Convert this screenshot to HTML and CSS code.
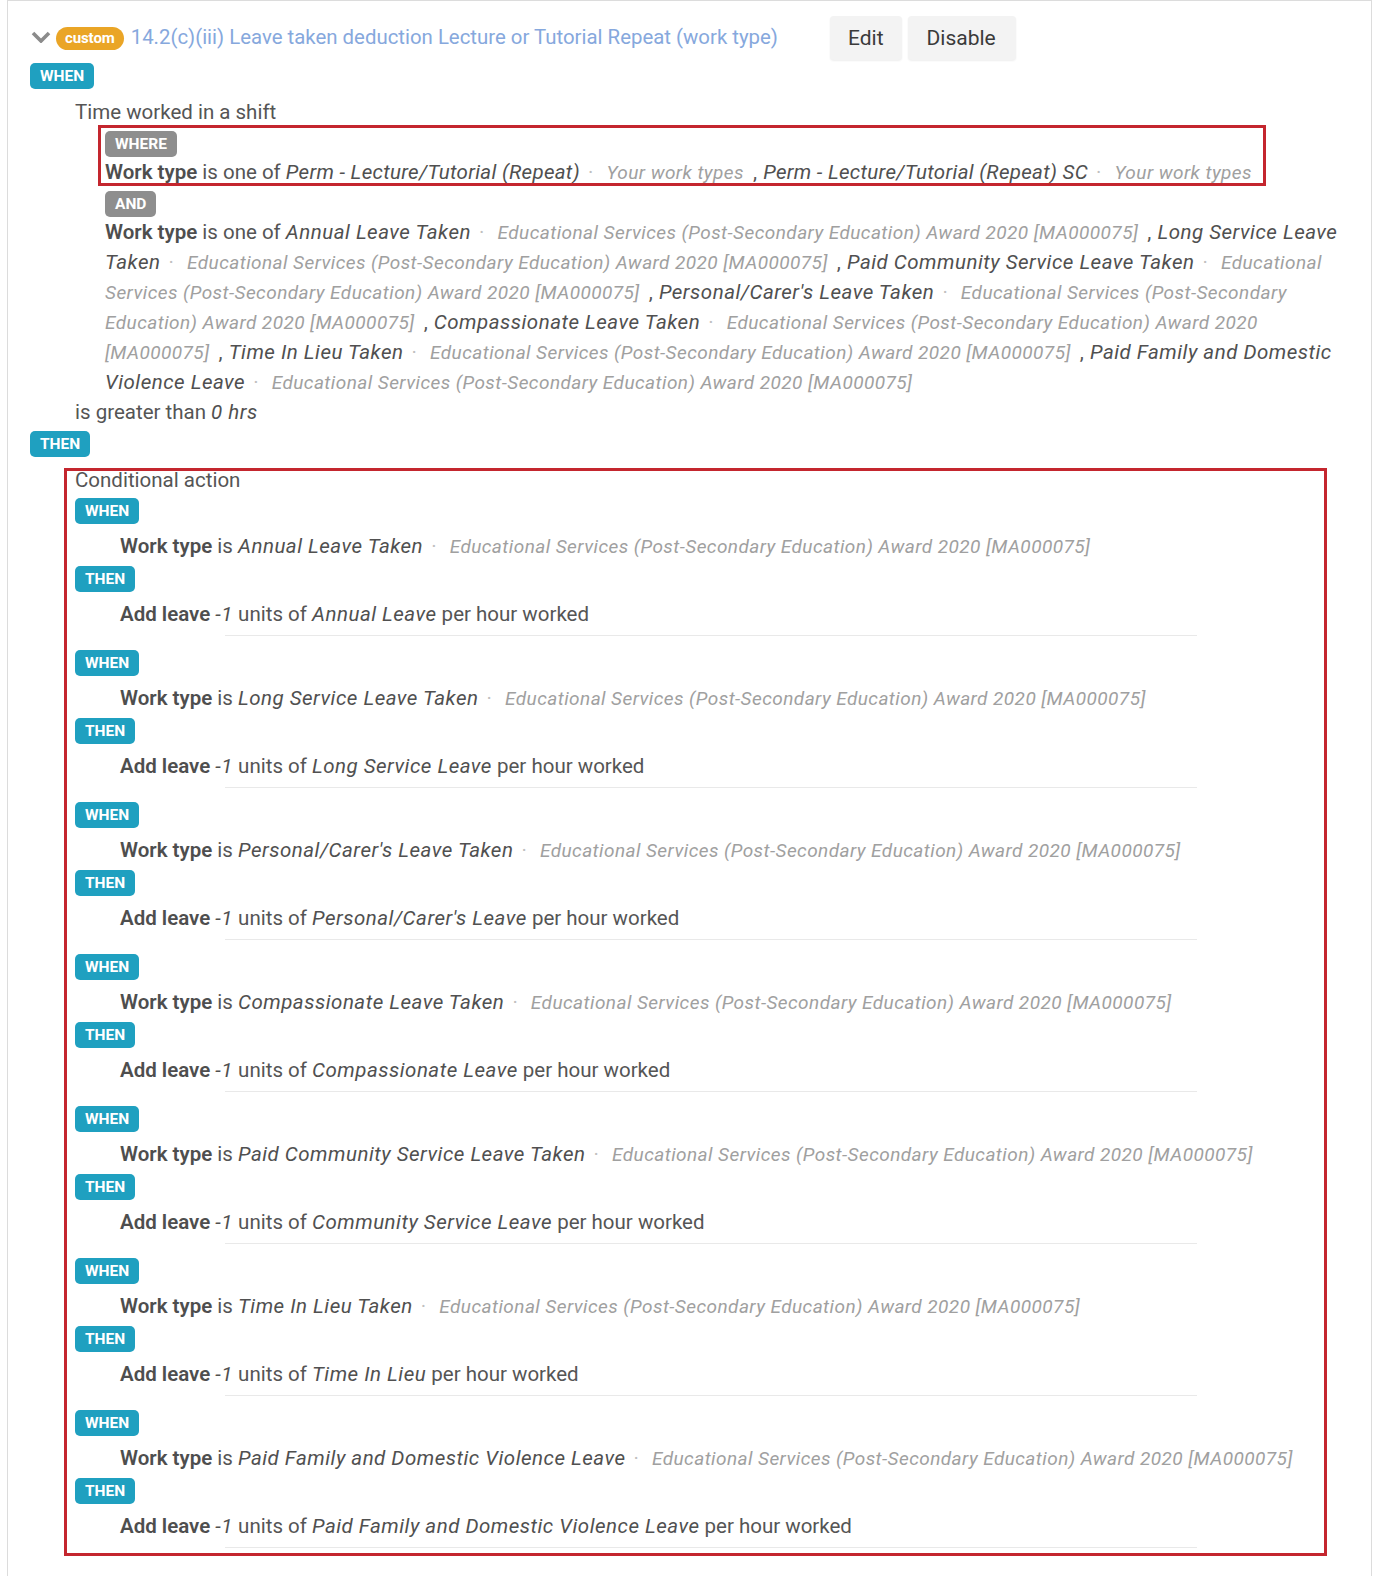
FILE: index.html
```html
<!DOCTYPE html>
<html lang="en">
<head>
<meta charset="utf-8">
<title>Rule</title>
<link rel="stylesheet" href="styles.css">
</head>
<body>
<div class="card">
  <div class="rule-head">
    <svg class="chev" viewBox="0 0 20 12" width="20" height="12" aria-hidden="true"><polyline points="2,2 10,10 18,2"/></svg>
    <span class="tag">custom</span>
    <a class="rule-title" href="#">14.2(c)(iii) Leave taken deduction Lecture or Tutorial Repeat (work type)</a>
    <div class="actions">
      <button class="btn" type="button">Edit</button>
      <button class="btn" type="button">Disable</button>
    </div>
  </div>

  <span class="badge teal first">WHEN</span>
  <div class="cond">
    <div class="line subject">Time worked in a shift</div>
    <div class="filters">
      <div class="where">
        <span class="badge gray where-badge">WHERE</span>
        <p class="line"><b>Work type</b> is one of <em class="val">Perm - Lecture/Tutorial (Repeat)</em> <span class="dot">·</span> <em class="src">Your work types</em> <span class="comma">,</span> <em class="val">Perm - Lecture/Tutorial (Repeat) SC</em> <span class="dot">·</span> <em class="src">Your work types</em></p>
      </div>
      <span class="badge gray and-badge">AND</span>
      <p class="line"><b>Work type</b> is one of <em class="val">Annual Leave Taken</em> <span class="dot">·</span> <em class="src">Educational Services (Post-Secondary Education) Award 2020 [MA000075]</em> <span class="comma">,</span> <em class="val">Long Service Leave Taken</em> <span class="dot">·</span> <em class="src">Educational Services (Post-Secondary Education) Award 2020 [MA000075]</em> <span class="comma">,</span> <em class="val">Paid Community Service Leave Taken</em> <span class="dot">·</span> <em class="src">Educational Services (Post-Secondary Education) Award 2020 [MA000075]</em> <span class="comma">,</span> <em class="val">Personal/Carer's Leave Taken</em> <span class="dot">·</span> <em class="src">Educational Services (Post-Secondary Education) Award 2020 [MA000075]</em> <span class="comma">,</span> <em class="val">Compassionate Leave Taken</em> <span class="dot">·</span> <em class="src">Educational Services (Post-Secondary Education) Award 2020 [MA000075]</em> <span class="comma">,</span> <em class="val">Time In Lieu Taken</em> <span class="dot">·</span> <em class="src">Educational Services (Post-Secondary Education) Award 2020 [MA000075]</em> <span class="comma">,</span> <em class="val">Paid Family and Domestic Violence Leave</em> <span class="dot">·</span> <em class="src">Educational Services (Post-Secondary Education) Award 2020 [MA000075]</em></p>
    </div>
    <div class="line">is greater than <em class="val">0 hrs</em></div>
  </div>

  <span class="badge teal then-badge">THEN</span>
  <div class="action">
    <div class="action-title">Conditional action</div>

    <div class="branch">
      <span class="badge teal">WHEN</span>
      <p class="line step"><b>Work type</b> is <em class="val">Annual Leave Taken</em> <span class="dot">·</span> <em class="src">Educational Services (Post-Secondary Education) Award 2020 [MA000075]</em></p>
      <span class="badge teal then">THEN</span>
      <p class="line step result"><b>Add leave</b> <em class="val">-1</em> units of <em class="val">Annual Leave</em> per hour worked</p>
      <hr class="rule-sep">
    </div>

    <div class="branch">
      <span class="badge teal">WHEN</span>
      <p class="line step"><b>Work type</b> is <em class="val">Long Service Leave Taken</em> <span class="dot">·</span> <em class="src">Educational Services (Post-Secondary Education) Award 2020 [MA000075]</em></p>
      <span class="badge teal then">THEN</span>
      <p class="line step result"><b>Add leave</b> <em class="val">-1</em> units of <em class="val">Long Service Leave</em> per hour worked</p>
      <hr class="rule-sep">
    </div>

    <div class="branch">
      <span class="badge teal">WHEN</span>
      <p class="line step"><b>Work type</b> is <em class="val">Personal/Carer's Leave Taken</em> <span class="dot">·</span> <em class="src">Educational Services (Post-Secondary Education) Award 2020 [MA000075]</em></p>
      <span class="badge teal then">THEN</span>
      <p class="line step result"><b>Add leave</b> <em class="val">-1</em> units of <em class="val">Personal/Carer's Leave</em> per hour worked</p>
      <hr class="rule-sep">
    </div>

    <div class="branch">
      <span class="badge teal">WHEN</span>
      <p class="line step"><b>Work type</b> is <em class="val">Compassionate Leave Taken</em> <span class="dot">·</span> <em class="src">Educational Services (Post-Secondary Education) Award 2020 [MA000075]</em></p>
      <span class="badge teal then">THEN</span>
      <p class="line step result"><b>Add leave</b> <em class="val">-1</em> units of <em class="val">Compassionate Leave</em> per hour worked</p>
      <hr class="rule-sep">
    </div>

    <div class="branch">
      <span class="badge teal">WHEN</span>
      <p class="line step"><b>Work type</b> is <em class="val">Paid Community Service Leave Taken</em> <span class="dot">·</span> <em class="src">Educational Services (Post-Secondary Education) Award 2020 [MA000075]</em></p>
      <span class="badge teal then">THEN</span>
      <p class="line step result"><b>Add leave</b> <em class="val">-1</em> units of <em class="val">Community Service Leave</em> per hour worked</p>
      <hr class="rule-sep">
    </div>

    <div class="branch">
      <span class="badge teal">WHEN</span>
      <p class="line step"><b>Work type</b> is <em class="val">Time In Lieu Taken</em> <span class="dot">·</span> <em class="src">Educational Services (Post-Secondary Education) Award 2020 [MA000075]</em></p>
      <span class="badge teal then">THEN</span>
      <p class="line step result"><b>Add leave</b> <em class="val">-1</em> units of <em class="val">Time In Lieu</em> per hour worked</p>
      <hr class="rule-sep">
    </div>

    <div class="branch">
      <span class="badge teal">WHEN</span>
      <p class="line step"><b>Work type</b> is <em class="val">Paid Family and Domestic Violence Leave</em> <span class="dot">·</span> <em class="src">Educational Services (Post-Secondary Education) Award 2020 [MA000075]</em></p>
      <span class="badge teal then">THEN</span>
      <p class="line step result"><b>Add leave</b> <em class="val">-1</em> units of <em class="val">Paid Family and Domestic Violence Leave</em> per hour worked</p>
      <hr class="rule-sep">
    </div>
  </div>
</div>
</body>
</html>
```
FILE: styles.css
```css
* {
  box-sizing: border-box;
}

body {
  margin: 0;
  background: #fff;
  font-family: Roboto, "Liberation Sans", Arial, sans-serif;
  color: #555;
}

p {
  margin: 0;
}

/* outer panel */
.card {
  margin-left: 7px;
  width: 1365px;
  min-height: 1600px;
  border: 1px solid #dcdcdc;
  border-bottom: 0;
  padding: 15px 15px 0 22px;
}

/* header row */
.rule-head {
  display: flex;
  align-items: center;
  height: 44px;
}

.chev {
  margin-left: 1px;
  margin-top: -3px;
  fill: none;
  stroke: #8b8b8b;
  stroke-width: 3.6;
  stroke-linejoin: miter;
}

.tag {
  margin-left: 5px;
  height: 23px;
  line-height: 23px;
  padding: 0 9px;
  border-radius: 12px;
  background: #eaa526;
  color: #fff;
  font-size: 15px;
  font-weight: 700;
  letter-spacing: -0.1px;
}

.rule-title {
  margin-left: 7px;
  margin-top: -3px;
  font-size: 20.4px;
  color: #86a8dd;
  text-decoration: none;
}

.actions {
  display: flex;
  gap: 6px;
  margin-left: 52px;
}

.btn {
  height: 44px;
  padding: 0 18px;
  border: 0;
  border-radius: 4px;
  background: #f3f3f3;
  box-shadow: 0 1px 2px rgba(0, 0, 0, 0.07);
  font-family: inherit;
  font-size: 21px;
  color: #3a3a3a;
}

.btn + .btn {
  padding: 0 20px 0 19px;
}

/* keyword badges */
.badge {
  display: block;
  width: fit-content;
  height: 26px;
  line-height: 26px;
  padding: 0 10px;
  border-radius: 5px;
  color: #fff;
  font-size: 15.5px;
  font-weight: 700;
  letter-spacing: 0;
}

.teal {
  background: #1fa0c0;
}

.gray {
  background: #8e8e8e;
}

.first {
  margin-top: 3px;
}

/* text rows */
.line {
  font-size: 20.5px;
  line-height: 30px;
  color: #555;
}

.line b {
  font-weight: 600;
  color: #4e4e4e;
}

.val {
  font-style: italic;
  letter-spacing: 0.5px;
  color: #505050;
}

.src {
  font-style: italic;
  font-size: 19px;
  line-height: 20px;
  letter-spacing: 0.43px;
  color: #a0a0a0;
}

.dot {
  line-height: 20px;
  margin: 0 8px 0 3px;
  color: #bfbfbf;
}

.comma {
  margin: 0 1px 0 4px;
  color: #555;
}

/* condition block */
.cond {
  padding-left: 45px;
}

.subject {
  margin-top: 8px;
}

.filters {
  margin-left: 30px;
}

.where {
  position: relative;
  width: fit-content;
}

.where .val {
  letter-spacing: 0.3px;
}

.where-badge {
  margin-top: 4px;
}

.and-badge {
  margin-top: 4px;
}

.then-badge {
  margin-top: 4px;
}

/* highlight frames drawn over the blocks */
.where::after,
.action::after {
  content: "";
  position: absolute;
  border: 3px solid #c4262e;
  pointer-events: none;
}

.where::after {
  left: -7px;
  top: -6px;
  right: -14px;
  bottom: 1px;
}

/* action block */
.action {
  position: relative;
  margin-top: 11px;
  margin-left: 45px;
  padding-bottom: 3px;
}

.action::after {
  left: -11px;
  top: 0;
  right: 29px;
  bottom: -5px;
}

.action-title {
  font-size: 20.5px;
  line-height: 24px;
  color: #555;
  margin-bottom: 6px;
}

.branch {
  margin-bottom: 14px;
}

.branch:last-child {
  margin-bottom: 0;
}

.step {
  margin-left: 45px;
  margin-top: 7px;
}

.branch .then {
  margin-top: 5px;
}

.rule-sep {
  margin: 6px 0 0 150px;
  width: 972px;
  height: 1px;
  border: 0;
  background: #e9e9e9;
}
```
